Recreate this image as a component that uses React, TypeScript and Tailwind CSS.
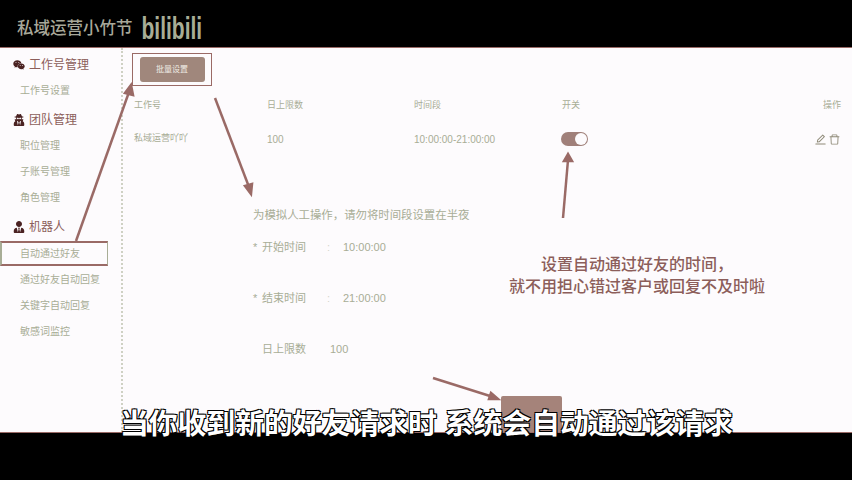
import { AiOutlineDelete, AiOutlineEdit } from "react-icons/ai";
import { FaUserSecret, FaUserTie, FaWeixin } from "react-icons/fa";

const MenuItem = ({ label, active }: { label: string; active?: boolean }) => (
  <div
    className={
      active
        ? "mt-[2px] flex h-[25px] w-[108px] items-center border-y-2 border-l-2 border-r border-y-[#9a6a66] border-l-[#a8ad96] border-r-[#a8ad96] pl-[18px]"
        : "flex h-[26px] items-center pl-5"
    }
  >
    {label}
  </div>
);

const MenuGroup = ({ icon, label }: { icon: React.ReactNode; label: string }) => (
  <div className="mt-[3px] flex h-[26px] items-center gap-[4px] pl-[13px] pt-[2px] text-xs text-[#8c5e5a]">
    <span className="w-[12px] text-[#4a2222]">{icon}</span>
    {label}
  </div>
);

const Sidebar = () => (
  <aside className="w-[123px] shrink-0 border-r-2 border-dotted border-[#cfd1c4] text-[10px] text-[#a8ad96]">
    <MenuGroup icon={<FaWeixin size={12} />} label="工作号管理" />
    <MenuItem label="工作号设置" />
    <MenuGroup icon={<FaUserSecret size={12} />} label="团队管理" />
    <MenuItem label="职位管理" />
    <MenuItem label="子账号管理" />
    <MenuItem label="角色管理" />
    <MenuGroup icon={<FaUserTie size={12} />} label="机器人" />
    <MenuItem active label="自动通过好友" />
    <MenuItem label="通过好友自动回复" />
    <MenuItem label="关键字自动回复" />
    <MenuItem label="敏感词监控" />
  </aside>
);

const FormRow = ({
  label,
  value,
  required,
}: {
  label: string;
  value: string;
  required?: boolean;
}) => (
  <div className="flex h-5 items-center text-[11px] text-[#a8ad96]">
    <span className="w-[9px]">{required ? "*" : ""}</span>
    <span className="w-[45px]">{label}</span>
    {required ? (
      <span className="ml-[20px] w-[16px] text-[#d5d6cb]">:</span>
    ) : (
      <span className="w-[23px]" />
    )}
    <span>{value}</span>
  </div>
);

const Content = () => (
  <section className="flex-1 pl-[9px] pr-[11px] pt-[5px]">
    <div className="flex h-[33px] w-[80px] items-center justify-center border border-[#9a6a66]">
      <button className="h-[25px] w-[65px] rounded-[3px] bg-[#a0877c] text-[8px] text-[#efece4]">
        批量设置
      </button>
    </div>

    <div className="ml-[2px] mt-[9px] grid grid-cols-[133px_147px_148px_1fr_auto] items-center text-[9px] text-[#a8ad96]">
      <div className="h-5 leading-5">工作号</div>
      <div className="h-5 leading-5">日上限数</div>
      <div className="h-5 leading-5">时间段</div>
      <div className="h-5 leading-5">开关</div>
      <div className="h-5 text-right leading-5">操作</div>

      <div className="mt-[11px] flex h-[26px] items-center">私域运营吖吖</div>
      <div className="mt-[11px] flex h-[26px] items-center text-[10px]">100</div>
      <div className="mt-[11px] flex h-[26px] items-center text-[10px]">
        10:00:00-21:00:00
      </div>
      <div className="mt-[11px] flex h-[26px] items-center">
        <div className="-ml-px flex h-[14px] w-[27px] items-center justify-end rounded-full bg-[#a0807a] pr-[1px]">
          <div className="size-[12px] rounded-full bg-[#fdfbfd]" />
        </div>
      </div>
      <div className="mt-[11px] flex h-[26px] items-center gap-[1px] text-[#8f8a78]">
        <AiOutlineEdit size={13} />
        <AiOutlineDelete size={13} />
      </div>
    </div>

    <div className="ml-[121px] mt-[55px]">
      <p className="h-4 text-[11.4px] leading-4 text-[#a8ad96]">
        为模拟人工操作，请勿将时间段设置在半夜
      </p>
      <div className="mt-[14px]">
        <FormRow required label="开始时间" value="10:00:00" />
      </div>
      <div className="mt-[31px]">
        <FormRow required label="结束时间" value="21:00:00" />
      </div>
      <div className="mt-[31px]">
        <FormRow label="日上限数" value="100" />
      </div>
      <button className="ml-[248px] mt-[37px] block h-[50px] w-[61px] rounded-[2px] bg-[#a5837a]" />
    </div>
  </section>
);

export default function App() {
  return (
    <div
      className="relative flex h-[480px] w-[852px] flex-col overflow-hidden bg-black"
      style={{ fontFamily: '"Liberation Sans", "Noto Sans CJK SC", sans-serif' }}
    >
      <header className="flex h-[48px] shrink-0 items-end gap-[9px] border-b border-[#9a6a66] pb-[7px] pl-[17px]">
        <span className="text-[16.5px] font-medium leading-6 text-[#a8a89a]">私域运营小竹节</span>
        <span className="-mb-[3px] inline-block origin-bottom scale-y-[1.5] text-[21px] font-bold leading-5 text-[#a8ad96]">
          bilibili
        </span>
      </header>

      <main className="flex h-[385px] shrink-0 overflow-hidden border-b border-[#9a6a66] bg-[#fdfbfd]">
        <Sidebar />
        <Content />
      </main>

      <div className="absolute left-[509px] top-[254px] w-[256px] text-center text-base font-medium leading-[22px] text-[#8c5e5a]">
        <p>设置自动通过好友的时间，</p>
        <p>就不用担心错过客户或回复不及时啦</p>
      </div>

      <svg className="pointer-events-none absolute inset-0" width="852" height="480">
        <g stroke="#9a6a66" strokeWidth="2.5" fill="#9a6a66">
          <line x1="76" y1="241" x2="129" y2="92" />
          <polygon points="131,85 125,93 133,95" />
          <line x1="215" y1="98" x2="249" y2="187" />
          <polygon points="251,194 245,186 252,184" />
          <line x1="563" y1="218" x2="568" y2="160" />
          <polygon points="568,154 564,161 572,161" />
          <line x1="433" y1="378" x2="490" y2="396" />
          <polygon points="498,399 489,399 491,393" />
        </g>
      </svg>

      <div className="absolute left-[120px] top-[404px] whitespace-nowrap text-[28.8px] font-bold leading-10 text-white [text-shadow:1px_1px_0_#000,-1px_-1px_0_#000,1px_-1px_0_#000,-1px_1px_0_#000]">
        当你收到新的好友请求时 系统会自动通过该请求
      </div>
    </div>
  );
}
